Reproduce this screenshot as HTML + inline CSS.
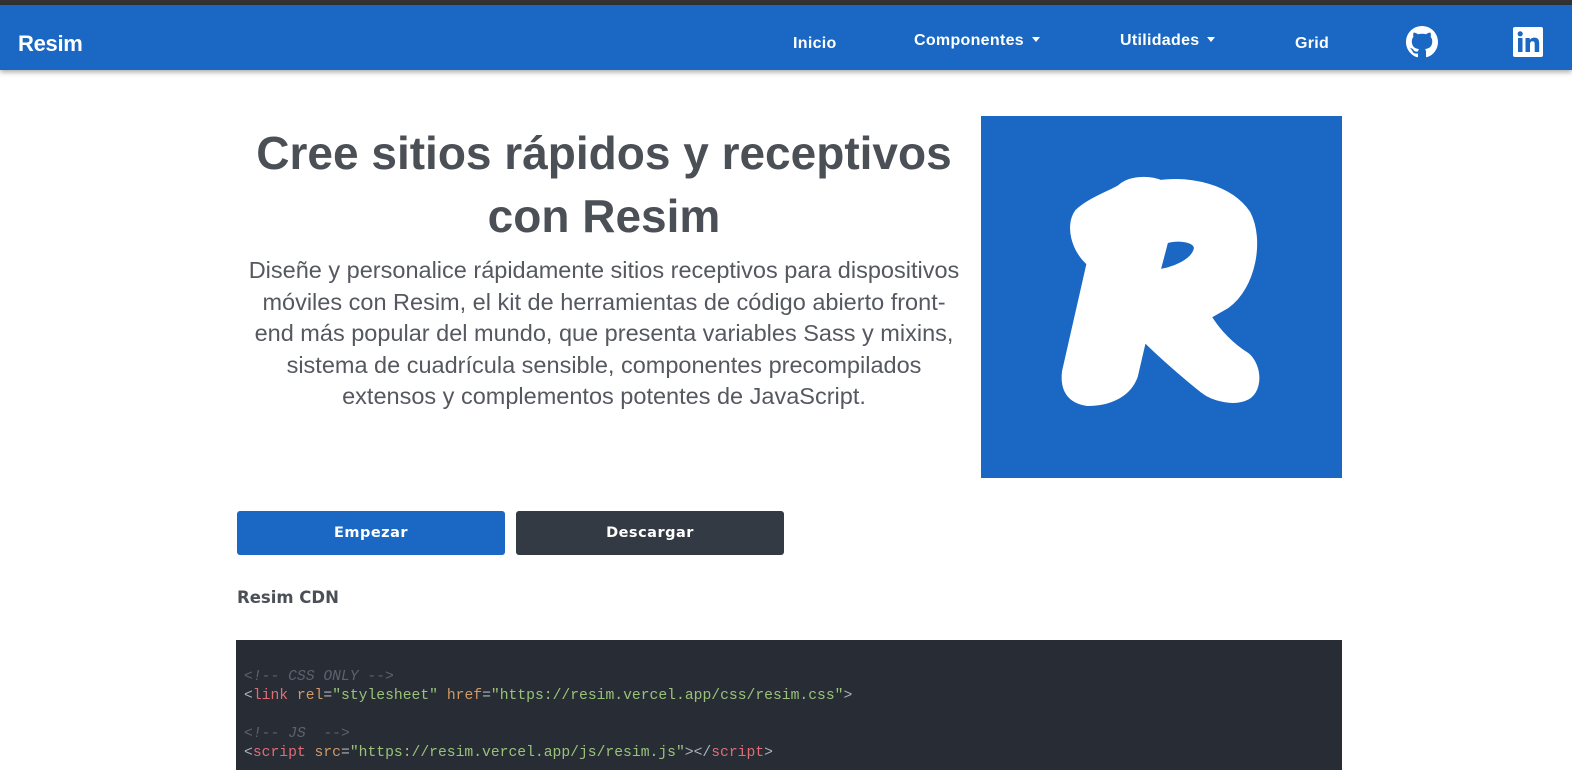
<!DOCTYPE html>
<html><head><meta charset="utf-8"><style>
*{margin:0;padding:0;box-sizing:border-box}
body{width:1572px;height:762px;overflow:hidden;background:#fff;font-family:"DejaVu Sans","Liberation Sans",sans-serif;position:relative}
.top{position:absolute;left:0;top:0;width:1572px;height:5px;background:#333}
.nav{position:absolute;left:0;top:5px;width:1572px;height:65px;background:#1a68c3;box-shadow:0 2px 5px rgba(0,0,0,.35);color:#fff;font-family:"Liberation Sans",sans-serif}
.nav span{position:absolute;font-size:16px;font-weight:bold;letter-spacing:.3px}
.brand{left:18px;top:26px;font-size:22px!important;letter-spacing:-.3px!important}
.car{display:inline-block;width:0;height:0;border-left:4px solid transparent;border-right:4px solid transparent;border-top:5px solid #fff;margin-left:8px;vertical-align:3px}
h1{position:absolute;left:236px;width:736px;top:122px;text-align:center;font-family:"Liberation Sans",sans-serif;font-size:46px;line-height:63px;color:#4b4f56;font-weight:bold;white-space:nowrap}
p.lead{position:absolute;left:236px;width:736px;top:255px;text-align:center;font-family:"Liberation Sans",sans-serif;font-size:23.5px;line-height:31.5px;color:#55595f;white-space:nowrap}
.logo{position:absolute;left:981px;top:116px;width:361px;height:362px;background:#1a68c3}
.btn{position:absolute;top:511px;height:44px;border-radius:3px;color:#fff;font-weight:bold;font-size:14.5px;text-align:center;line-height:44px;letter-spacing:.5px}
.cdn{position:absolute;left:237px;top:588px;font-size:16.5px;font-weight:bold;color:#4b4f56}
.code{position:absolute;left:236px;top:640px;width:1106px;height:130px;background:#282c34;font-family:"Liberation Mono",monospace;font-size:14.7px;line-height:19px;color:#abb2bf;padding:28px 0 0 8px;white-space:pre}
.c{color:#5c6370;font-style:italic}.t{color:#e06c75}.a{color:#d19a66}.s{color:#98c379}
</style></head><body>
<div class="top"></div>
<div class="nav">
<span class="brand">Resim</span>
<span style="left:793px;top:30px">Inicio</span>
<span style="left:914px;top:27px">Componentes<i class="car"></i></span>
<span style="left:1120px;top:27px">Utilidades<i class="car"></i></span>
<span style="left:1295px;top:30px">Grid</span>
<svg style="position:absolute;left:1406px;top:21px" width="32" height="32" viewBox="0 0 16 16"><path fill="#fff" d="M8 0C3.580 0 0 3.58 0 8c0 3.54 2.290 6.53 5.47 7.59.4.07.55-.17.55-.38 0-.19-.01-.82-.01-1.490-2.01.37-2.53-.49-2.69-.94-.09-.23-.48-.94-.82-1.13-.28-.15-.68-.52-.01-.53.63-.01 1.08.58 1.23.82.72 1.21 1.87.87 2.33.66.07-.52.28-.87.51-1.07-1.78-.2-3.64-.89-3.64-3.95 0-.87.31-1.59.82-2.15-.08-.2-.36-1.02.08-2.12 0 0 .67-.21 2.2.82.64-.18 1.32-.27 2-.27.68 0 1.36.09 2 .27 1.53-1.04 2.2-.82 2.2-.82.44 1.1.16 1.92.08 2.12.51.56.82 1.27.82 2.15 0 3.07-1.87 3.75-3.650 3.95.29.25.54.73.54 1.48 0 1.07-.01 1.93-.01 2.2 0 .21.15.46.55.38A8.013 8.013 0 0016 8c0-4.42-3.58-8-8-8z"/></svg>
<svg style="position:absolute;left:1513px;top:22px" width="30" height="30" viewBox="0 0 30 30"><rect width="30" height="30" rx="2" fill="#fff"/><rect x="5" y="11" width="4.5" height="14" fill="#1a68c3"/><circle cx="7.2" cy="6.8" r="2.6" fill="#1a68c3"/><path fill="#1a68c3" d="M12.5 11h4.3v2c.7-1.3 2.3-2.4 4.6-2.4 4 0 4.8 2.6 4.8 6V25h-4.5v-7.4c0-1.8-.1-3.4-2.1-3.4s-2.6 1.4-2.6 3.3V25h-4.5z"/></svg>
</div>
<h1>Cree sitios rápidos y receptivos<br>con Resim</h1>
<p class="lead">Diseñe y personalice rápidamente sitios receptivos para dispositivos<br>móviles con Resim, el kit de herramientas de código abierto front-<br>end más popular del mundo, que presenta variables Sass y mixins,<br>sistema de cuadrícula sensible, componentes precompilados<br>extensos y complementos potentes de JavaScript.</p>
<div class="logo"><svg width="361" height="362" viewBox="981 116 361 362"><path fill="#fff" stroke="#fff" stroke-width="12" stroke-linejoin="round" fill-rule="evenodd" d="M1093,262 C1076,248 1072,225 1080,214 C1092,203 1110,197 1122,190 C1130,182 1148,181 1160,186 C1190,182 1228,190 1245,215 C1258,240 1250,285 1225,303 L1204,315 C1215,335 1232,350 1245,358 C1256,368 1256,388 1246,394 C1235,400 1215,396 1205,388 C1185,372 1160,350 1142,332 L1132,375 C1126,392 1108,400 1088,400 C1072,398 1066,388 1068,372 Z M1163,238 C1180,233 1199,236 1200,248 C1198,264 1175,274 1153,276 Z"/></svg></div>
<div class="btn" style="left:237px;width:268px;background:#1a68c3">Empezar</div>
<div class="btn" style="left:516px;width:268px;background:#343a43">Descargar</div>
<div class="cdn">Resim CDN</div>
<div class="code"><span class="c">&lt;!-- CSS ONLY --&gt;</span>
&lt;<span class="t">link</span> <span class="a">rel</span>=<span class="s">"stylesheet"</span> <span class="a">href</span>=<span class="s">"https://resim.vercel.app/css/resim.css"</span>&gt;

<span class="c">&lt;!-- JS  --&gt;</span>
&lt;<span class="t">script</span> <span class="a">src</span>=<span class="s">"https://resim.vercel.app/js/resim.js"</span>&gt;&lt;/<span class="t">script</span>&gt;</div>
</body></html>
